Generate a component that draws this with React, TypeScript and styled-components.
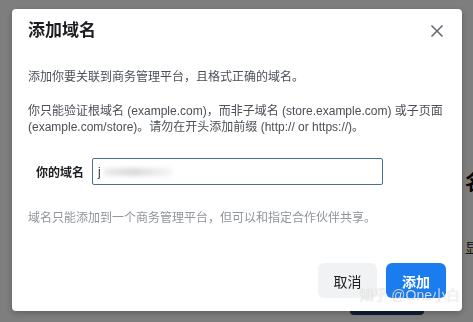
import styled, { createGlobalStyle } from "styled-components";

const GlobalStyle = createGlobalStyle`
  html, body {
    margin: 0;
    padding: 0;
    width: 473px;
    height: 322px;
    overflow: hidden;
    background: #fcfcfc;
    font-family: "Liberation Sans", "Noto Sans CJK SC", Arial, sans-serif;
  }
`;

export const BgPage = styled.div`
  width: 473px;
  height: 322px;
  display: grid;
  grid-template-columns: 462px 1fr;
`;

export const BgMain = styled.div`
  display: flex;
  flex-direction: column;
  justify-content: flex-end;
  padding-left: 350px;
`;

export const BgButton = styled.div`
  width: 74px;
  height: 12px;
  margin-bottom: 7px;
  background: #1a3d6e;
  border-radius: 4px;
`;

export const BgSide = styled.div`
  display: flex;
  flex-direction: column;
  padding-top: 170px;
  padding-left: 3px;
  overflow: hidden;
  white-space: nowrap;
  color: #111;
`;

export const BgHeading = styled.div`
  font-size: 20px;
  font-weight: 700;
  line-height: 26px;
`;

export const BgText = styled.div`
  margin-top: 44px;
  font-size: 14px;
  line-height: 16px;
  color: #222;
`;

export const Overlay = styled.div`
  position: fixed;
  inset: 0;
  background: rgba(0, 0, 0, 0.5);
  padding: 9px 0 0 12px;
`;

export const Modal = styled.div`
  position: relative;
  width: 450px;
  height: 302px;
  background: #fff;
  border-radius: 4px;
  box-shadow: 0 2px 6px rgba(0, 0, 0, 0.25);
  display: flex;
  flex-direction: column;
`;

export const Header = styled.div`
  display: flex;
  align-items: center;
  justify-content: space-between;
  padding: 12px 16px 0 16px;
`;

export const Title = styled.h2`
  margin: 0;
  font-size: 17px;
  line-height: 20px;
  font-weight: 600;
  color: #1c1e21;
`;

export const CloseButton = styled.button`
  border: 0;
  background: none;
  padding: 0;
  width: 14px;
  height: 14px;
  display: flex;
  cursor: pointer;
  margin-right: 2px;
`;

export const Body = styled.div`
  padding: 28px 16px 0 16px;
`;

export const Paragraph = styled.p<{ $gap?: number }>`
  margin: 0 0 ${(p) => p.$gap ?? 0}px 0;
  font-size: 12px;
  line-height: 16px;
  color: #4b4f56;
`;

export const FieldRow = styled.div`
  display: flex;
  align-items: center;
  gap: 8px;
  margin: 23px 0 0 8px;
`;

export const Label = styled.label`
  font-size: 12px;
  font-weight: 700;
  color: #1c1e21;
`;

export const InputBox = styled.div`
  box-sizing: border-box;
  width: 291px;
  height: 27px;
  border: 1px solid #4a6f93;
  border-radius: 2px;
  display: flex;
  align-items: center;
  padding-left: 5px;
  font-size: 12px;
  color: #333;
`;

export const Blurred = styled.span`
  margin-left: 3px;
  display: inline-block;
  width: 68px;
  height: 8px;
  background: linear-gradient(90deg, #ececec, #d9d9d9 45%, #e8e8e8 70%, #f4f4f4);
  filter: blur(2px);
`;

export const Hint = styled.p`
  margin: 25px 0 0 0;
  font-size: 12px;
  line-height: 16px;
  color: #90949c;
`;

export const Footer = styled.div`
  margin-top: auto;
  display: flex;
  justify-content: flex-end;
  gap: 9px;
  padding: 0 16px 13px 0;
`;

export const Button = styled.button<{ $primary?: boolean }>`
  height: 35px;
  width: ${(p) => (p.$primary ? 60 : 59)}px;
  border: 0;
  border-radius: 6px;
  font-family: inherit;
  font-size: 14px;
  font-weight: ${(p) => (p.$primary ? 700 : 400)};
  background: ${(p) => (p.$primary ? "#1b7cf0" : "#f1f2f4")};
  color: ${(p) => (p.$primary ? "#fff" : "#1c1e21")};
  cursor: pointer;
`;

export const Watermark = styled.div`
  position: absolute;
  right: 2px;
  bottom: 7px;
  font-size: 14px;
  line-height: 17px;
  color: rgba(255, 255, 255, 0.8);
  text-shadow: 0 0 1px rgba(0, 0, 0, 0.3);
  white-space: nowrap;
`;

function CloseIcon() {
  return (
    <svg width="14" height="14" viewBox="0 0 14 14">
      <path d="M1.5 1.5 L12.5 12.5 M12.5 1.5 L1.5 12.5" stroke="#606770" strokeWidth="1.5" fill="none" />
    </svg>
  );
}

function App() {
  return (
    <>
      <GlobalStyle />
      <BgPage>
        <BgMain>
          <BgButton />
        </BgMain>
        <BgSide>
          <BgHeading>名</BgHeading>
          <BgText>显</BgText>
        </BgSide>
      </BgPage>
      <Overlay>
        <Modal>
          <Header>
            <Title>添加域名</Title>
            <CloseButton aria-label="关闭">
              <CloseIcon />
            </CloseButton>
          </Header>
          <Body>
            <Paragraph $gap={18}>添加你要关联到商务管理平台，且格式正确的域名。</Paragraph>
            <Paragraph>
              你只能验证根域名 (example.com)，而非子域名 (store.example.com) 或子页面 (example.com/store)。请勿在开头添加前缀 (http:// or https://)。
            </Paragraph>
            <FieldRow>
              <Label>你的域名</Label>
              <InputBox>
                j<Blurred />
              </InputBox>
            </FieldRow>
            <Hint>域名只能添加到一个商务管理平台，但可以和指定合作伙伴共享。</Hint>
          </Body>
          <Footer>
            <Button>取消</Button>
            <Button $primary>添加</Button>
          </Footer>
          <Watermark>知乎 @One小白</Watermark>
        </Modal>
      </Overlay>
    </>
  );
}

export default App;
